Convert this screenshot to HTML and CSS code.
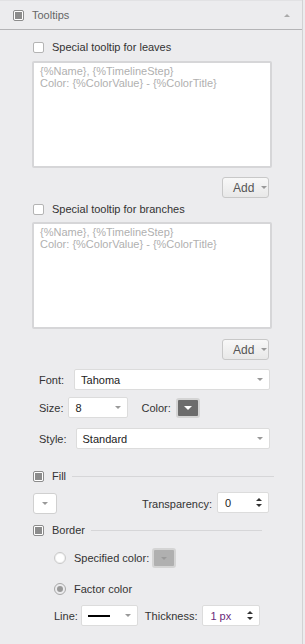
FILE: index.html
```html
<!doctype html>
<html>
    <head>
        <meta charset="utf-8" />
        <title>Tooltips</title>
        <link rel="stylesheet" href="styles.css">
    </head>
    <body>
        <div class="panel">
            <div class="head">
                <span class="check dark"></span>
                <span class="head_title">Tooltips</span>
                <span class="caret_up"></span>
            </div>
            <div class="body">
                <label class="row check_row first">
                    <span class="check"></span>Special tooltip for leaves
                </label>
                <div class="area">
                    {%Name}, {%TimelineStep}<br />Color: {%ColorValue} - {%ColorTitle}
                </div>
                <div class="add_row">
                    <button class="add">Add <span class="caret"></span></button>
                </div>
                <label class="row check_row second">
                    <span class="check"></span>Special tooltip for branches
                </label>
                <div class="area second_area">
                    {%Name}, {%TimelineStep}<br />Color: {%ColorValue} - {%ColorTitle}
                </div>
                <div class="add_row second_add">
                    <button class="add">Add <span class="caret"></span></button>
                </div>

                <div class="field font_row">
                    <span class="label">Font:</span>
                    <div class="select wide">Tahoma<span class="caret"></span></div>
                </div>
                <div class="field size_row">
                    <span class="label">Size:</span>
                    <div class="select size">8<span class="caret"></span></div>
                    <span class="label color_label">Color:</span>
                    <div class="color_btn"><span class="caret white"></span></div>
                </div>
                <div class="field style_row">
                    <span class="label">Style:</span>
                    <div class="select wide style">Standard<span class="caret"></span></div>
                </div>

                <div class="section fill_row">
                    <span class="check dark"></span>
                    <span class="section_title">Fill</span>
                    <span class="rule"></span>
                </div>
                <div class="fill_opts">
                    <div class="drop_btn"><span class="caret"></span></div>
                    <span class="label trans_label">Transparency:</span>
                    <div class="spin trans">0<span class="arrows"><i class="up"></i><i class="down"></i></span></div>
                </div>

                <div class="section border_row">
                    <span class="check dark"></span>
                    <span class="section_title">Border</span>
                    <span class="rule short"></span>
                </div>
                <div class="border_opts">
                    <div class="radio_row spec">
                        <span class="radio"></span>
                        <span class="radio_text">Specified color:</span>
                        <div class="color_btn light"><span class="caret"></span></div>
                    </div>
                    <div class="radio_row factor">
                        <span class="radio on"></span>
                        <span class="radio_text">Factor color</span>
                    </div>
                    <div class="line_row">
                        <span class="label">Line:</span>
                        <div class="select line"><span class="stroke"></span><span class="caret"></span></div>
                        <span class="label thick_label">Thickness:</span>
                        <div class="spin thick">1 px<span class="arrows"><i class="up"></i><i class="down"></i></span></div>
                    </div>
                </div>
            </div>
        </div>
    </body>
</html>
```

FILE: styles.css
```css
html,
body {
    margin: 0;
    height: 100%;
}
body {
    background: #ececee;
    font-family: "Liberation Sans", Arial, sans-serif;
    font-size: 11px;
    color: #333;
}
.panel {
    width: 303px;
    height: 100%;
    border-right: 1px solid #d2d2d4;
    box-sizing: border-box;
}
.head {
    display: flex;
    align-items: center;
    height: 30px;
    padding-left: 13px;
    border-top: 1px solid #e2e2e4;
    border-bottom: 1px solid #b4b4b6;
    box-sizing: border-box;
}
.head_title {
    margin-left: 8px;
    color: #666;
}
.caret_up {
    margin-left: auto;
    margin-right: 12px;
    width: 0;
    height: 0;
    border-left: 3px solid transparent;
    border-right: 3px solid transparent;
    border-bottom: 3px solid #aaa;
}
.check {
    display: inline-block;
    width: 11px;
    height: 11px;
    border: 1px solid #b4b4b4;
    border-radius: 2px;
    background: #fff;
    box-sizing: border-box;
    flex: none;
}
.check.dark {
    border-color: #8c8c8c;
    padding: 1px;
    background: #8c8c8c content-box;
    box-shadow: inset 0 0 0 1px #fff;
}
.body {
    padding-left: 33px;
}
.row {
    display: flex;
    align-items: center;
    height: 16px;
    gap: 8px;
}
.check_row.first {
    margin-top: 9px;
}
.check_row.second {
    margin-top: 3px;
}
.area {
    margin-top: 6px;
    margin-left: -1px;
    width: 240px;
    height: 107px;
    background: #fff;
    border: 2px solid #d6d6d8;
    border-radius: 2px;
    box-sizing: border-box;
    padding: 2px 6px;
    color: #b0b0b0;
    line-height: 12px;
}
.second_area {
    margin-top: 5px;
}
.add_row {
    display: flex;
    justify-content: flex-end;
    width: 236px;
    margin-top: 9px;
}
.second_add {
    margin-top: 10px;
}
.add {
    display: flex;
    align-items: center;
    gap: 7px;
    height: 21px;
    width: 47px;
    padding: 0 0 0 10px;
    font: inherit;
    font-size: 12px;
    color: #555;
    background: linear-gradient(#f8f8f8, #e8e8e8);
    border: 1px solid #c8c8c8;
    border-radius: 3px;
}
.caret {
    display: inline-block;
    width: 0;
    height: 0;
    border-left: 3px solid transparent;
    border-right: 3px solid transparent;
    border-top: 3px solid #999;
}
.caret.white {
    border-top-color: #fff;
    border-left-width: 4px;
    border-right-width: 4px;
    border-top-width: 4px;
}
.field {
    display: flex;
    align-items: center;
    padding-left: 6px;
}
.label {
    color: #333;
}
.select {
    display: flex;
    align-items: center;
    justify-content: space-between;
    height: 21px;
    box-sizing: border-box;
    background: #fff;
    border: 1px solid #dcdcdc;
    border-radius: 2px;
    padding: 0 6px;
    color: #222;
}
.font_row {
    margin-top: 9px;
}
.font_row .select {
    margin-left: 10px;
    width: 196px;
}
.size_row {
    margin-top: 7px;
}
.size_row .select {
    margin-left: 5px;
    width: 60px;
}
.color_label {
    margin-left: 13px;
}
.color_btn {
    display: flex;
    align-items: center;
    justify-content: center;
    width: 24px;
    height: 20px;
    margin-left: 5px;
    background: #6c6c6c;
    border: 2px solid #d4d4d4;
    border-radius: 3px;
    box-sizing: border-box;
}
.color_btn.light {
    background: #b0b0b0;
    margin-left: 3px;
}
.style_row {
    margin-top: 10px;
}
.style_row .select {
    margin-left: 9px;
    width: 194px;
}
.section {
    display: flex;
    align-items: center;
    height: 16px;
}
.section_title {
    margin-left: 8px;
}
.rule {
    flex: 1;
    height: 1px;
    background: #d6d6d8;
    margin: 1px 28px 0 6px;
}
.rule.short {
    margin-right: 40px;
}
.fill_row {
    margin-top: 19px;
}
.fill_opts {
    display: flex;
    align-items: center;
    margin-top: 9px;
    width: 236px;
}
.drop_btn {
    display: flex;
    align-items: center;
    justify-content: center;
    width: 24px;
    height: 21px;
    box-sizing: border-box;
    background: #fff;
    border: 1px solid #d0d0d0;
    border-radius: 3px;
}
.trans_label {
    margin-left: auto;
    margin-right: 5px;
}
.spin {
    display: flex;
    align-items: center;
    justify-content: space-between;
    height: 21px;
    box-sizing: border-box;
    background: #fff;
    border: 1px solid #dcdcdc;
    border-radius: 2px;
    padding: 0 6px 0 7px;
    color: #222;
}
.trans {
    width: 52px;
    margin-top: -2px;
}
.arrows {
    display: flex;
    flex-direction: column;
    gap: 3px;
}
.arrows i {
    display: block;
    width: 0;
    height: 0;
    border-left: 3px solid transparent;
    border-right: 3px solid transparent;
}
.arrows .up {
    border-bottom: 3px solid #333;
}
.arrows .down {
    border-top: 3px solid #333;
}
.border_row {
    margin-top: 8px;
}
.border_opts {
    padding-left: 21px;
}
.radio_row {
    display: flex;
    align-items: center;
}
.radio_text {
    margin-left: 8px;
}
.spec {
    margin-top: 10px;
}
.factor {
    margin-top: 15px;
}
.radio {
    width: 12px;
    height: 12px;
    box-sizing: border-box;
    border: 1px solid #c8c8c8;
    border-radius: 50%;
    background: #fff;
    box-shadow: inset 0 0 0 1px #f0f0f0;
}
.radio.on {
    border-color: #a8a8a8;
    padding: 2px;
    background: #999 content-box;
    box-shadow: none;
}
.line_row {
    display: flex;
    align-items: center;
    margin-top: 10px;
}
.line {
    width: 57px;
    margin-left: 3px;
    padding-left: 6px;
}
.stroke {
    width: 22px;
    height: 2px;
    background: #000;
}
.thick_label {
    margin-left: 7px;
}
.thick {
    width: 58px;
    margin-left: 5px;
    color: #6a2a7a;
}
```
